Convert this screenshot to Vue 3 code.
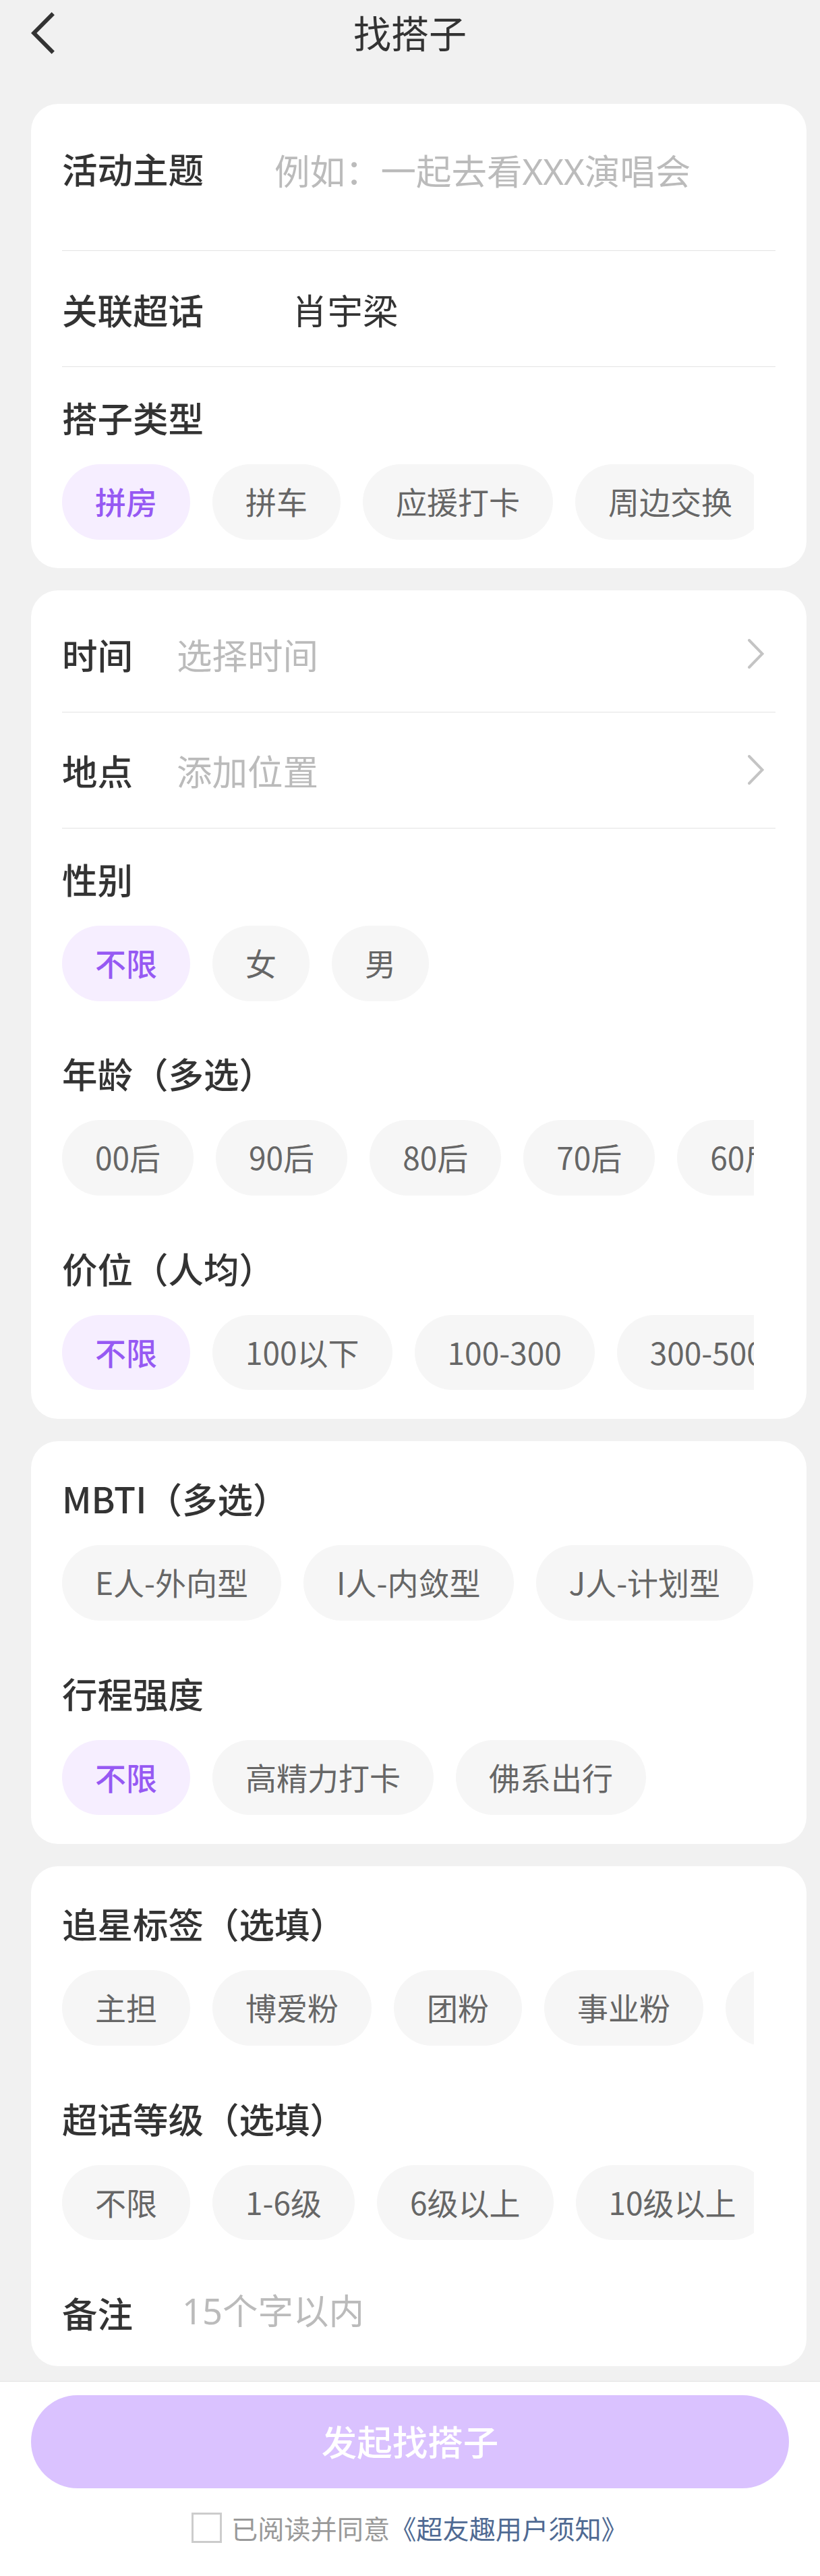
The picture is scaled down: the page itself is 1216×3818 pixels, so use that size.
<template>
  <div class="page">
    <header class="nav">
      <svg class="back" viewBox="0 0 36 64" @click="goBack">
        <path d="M32.8 3.2 L4.2 32 L32.8 60.8" />
      </svg>
      <div class="title">找搭子</div>
    </header>

    <main class="content">
      <!-- 活动信息 -->
      <section class="card">
        <div class="row theme">
          <span class="label">活动主题</span>
          <input v-model="form.theme" class="input" placeholder="例如：一起去看XXX演唱会" />
        </div>
        <div class="row topic">
          <span class="label">关联超话</span>
          <span class="value">{{ form.topic }}</span>
        </div>
        <div class="group first">
          <div class="label">搭子类型</div>
          <div class="chips">
            <span
                v-for="item in types"
                :key="item"
                class="chip"
                :class="{ active: form.type === item }"
                @click="form.type = item"
            >{{ item }}</span>
          </div>
        </div>
      </section>

      <!-- 时间地点、人员要求 -->
      <section class="card">
        <div v-for="row in pickers" :key="row.label" class="row picker">
          <span class="label">{{ row.label }}</span>
          <span class="placeholder">{{ row.hint }}</span>
          <svg class="arrow" viewBox="0 0 24 44">
            <path d="M2 2 L21.5 22 L2 42" />
          </svg>
        </div>
        <div v-for="(group, i) in people" :key="group.label" class="group" :class="{ first: i === 0 }">
          <div class="label">{{ group.label }}</div>
          <div class="chips">
            <span
                v-for="item in group.items"
                :key="item"
                class="chip"
                :class="{ active: group.selected.includes(item) }"
                @click="toggle(group, item)"
            >{{ item }}</span>
          </div>
        </div>
      </section>

      <section class="card">
        <div v-for="group in travel" :key="group.label" class="group">
          <div class="label">{{ group.label }}</div>
          <div class="chips">
            <span
                v-for="item in group.items"
                :key="item"
                class="chip"
                :class="{ active: group.selected.includes(item) }"
                @click="toggle(group, item)"
            >{{ item }}</span>
          </div>
        </div>
      </section>

      <!-- 选填 -->
      <section class="card">
        <div v-for="group in optional" :key="group.label" class="group">
          <div class="label">{{ group.label }}</div>
          <div class="chips">
            <span
                v-for="item in group.items"
                :key="item"
                class="chip"
                :class="{ active: group.selected.includes(item) }"
                @click="toggle(group, item)"
            >{{ item }}</span>
          </div>
        </div>
        <div class="row remark">
          <span class="label">备注</span>
          <input v-model="form.remark" class="input" maxlength="15" placeholder="15个字以内" />
        </div>
      </section>
    </main>

    <footer class="footer">
      <button class="submit">发起找搭子</button>
      <div class="agree">
        <span class="checkbox" :class="{ checked: agreed }" @click="agreed = !agreed"></span>
        <span class="agree-text">已阅读并同意</span>
        <a class="link">《超友趣用户须知》</a>
      </div>
    </footer>
  </div>
</template>

<script setup>
import { reactive, ref } from 'vue'

const form = reactive({
  theme: '',
  topic: '肖宇梁',
  type: '拼房',
  remark: ''
})
const agreed = ref(false)

const types = ['拼房', '拼车', '应援打卡', '周边交换']

const pickers = [
  { label: '时间', hint: '选择时间' },
  { label: '地点', hint: '添加位置' }
]

const people = reactive([
  { label: '性别', items: ['不限', '女', '男'], selected: ['不限'] },
  { label: '年龄（多选）', multi: true, items: ['00后', '90后', '80后', '70后', '60后'], selected: [] },
  { label: '价位（人均）', items: ['不限', '100以下', '100-300', '300-500'], selected: ['不限'] }
])

const travel = reactive([
  { label: 'MBTI（多选）', multi: true, items: ['E人-外向型', 'I人-内敛型', 'J人-计划型'], selected: [] },
  { label: '行程强度', items: ['不限', '高精力打卡', '佛系出行'], selected: ['不限'] }
])

const optional = reactive([
  { label: '追星标签（选填）', items: ['主担', '博爱粉', '团粉', '事业粉', ''], selected: [] },
  { label: '超话等级（选填）', items: ['不限', '1-6级', '6级以上', '10级以上'], selected: [] }
])

const toggle = (group, item) => {
  if (!group.multi) {
    group.selected = [item]
    return
  }
  const i = group.selected.indexOf(item)
  if (i > -1) {
    group.selected.splice(i, 1)
  } else {
    group.selected.push(item)
  }
}

const goBack = () => {
  window.history.back()
}
</script>

<style>
body {
  margin: 0;
  background: #f1f1f1;
}
</style>

<style scoped>
.page {
  display: flex;
  flex-direction: column;
  width: 1216px;
  height: 3818px;
  overflow: hidden;
  background: #f1f1f1;
  font-family: "Noto Sans CJK SC", sans-serif;
  font-size: 52.5px;
  color: #333;
}

.nav {
  display: grid;
  grid-template-columns: 36px 1fr 36px;
  align-items: center;
  height: 98px;
  padding: 0 46px;
}
.back {
  width: 36px;
  height: 64px;
}
.back path {
  fill: none;
  stroke: #333;
  stroke-width: 6;
}
.title {
  padding-bottom: 4px;
  font-size: 56px;
  line-height: 94px;
  text-align: center;
}

.content {
  flex: 1;
  display: flex;
  flex-direction: column;
  gap: 33px;
  padding: 56px 20px 0 46px;
}
.card {
  box-sizing: border-box;
  padding: 0 46px 20px;
  border-radius: 40px;
  background: #fff;
}

.row {
  display: flex;
  align-items: center;
  box-sizing: border-box;
  border-bottom: 1px solid #e3e3e3;
}
.label {
  font-weight: 500;
  line-height: 76px;
  white-space: nowrap;
}
.theme {
  align-items: flex-start;
  height: 218px;
  padding-top: 57px;
}
.theme .input {
  margin: 4px 0 0 105px;
}
.topic {
  height: 172px;
}
.topic .value {
  margin-left: 131px;
}
.picker {
  height: 172px;
  padding-bottom: 2px;
}
.picker:first-child {
  height: 181px;
  padding: 8px 0 0;
}
.placeholder {
  margin-left: 65px;
  color: #bbb;
}
.arrow {
  width: 24px;
  height: 44px;
  margin: 0 17px 0 auto;
}
.arrow path {
  fill: none;
  stroke: #c4c4c4;
  stroke-width: 4;
  stroke-linecap: round;
}
.remark {
  height: 144px;
  padding-top: 24px;
  border-bottom: 0;
}
.remark .input {
  margin: -6px 0 0 73px;
}

.input {
  flex: 1;
  min-width: 0;
  height: 76px;
  padding: 0;
  border: 0;
  outline: none;
  background: transparent;
  font-family: "Noto Sans", "Noto Sans CJK SC", sans-serif;
  font-size: 52.5px;
  color: #333;
}
.input::placeholder {
  color: #bbb;
  opacity: 1;
}

.group {
  box-sizing: border-box;
  height: 288.5px;
  padding-top: 46px;
}
.group.first {
  height: 278px;
  padding-top: 36px;
}
.chips {
  display: flex;
  gap: 33px;
  width: 1026px;
  margin-top: 32px;
  overflow: hidden;
}
.chip {
  flex: none;
  box-sizing: border-box;
  min-width: 144px;
  height: 111.5px;
  padding: 0 49px;
  border-radius: 56px;
  background: #f6f6f6;
  font-size: 46px;
  line-height: 108px;
  color: #666;
}
.chip.active {
  background: #f6eeff;
  font-weight: 500;
  color: #9659f3;
}

.footer {
  box-sizing: border-box;
  height: 289px;
  padding: 20px 46px 0;
  border-top: 1px solid #e2e2e2;
  background: #fff;
}
.submit {
  display: block;
  width: 100%;
  height: 138px;
  padding: 0 0 4px;
  border: 0;
  border-radius: 69px;
  background: #dac2ff;
  font-family: inherit;
  font-size: 52.5px;
  font-weight: 500;
  color: #fff;
}
.agree {
  display: flex;
  align-items: center;
  height: 46px;
  margin-top: 35px;
  padding-left: 238px;
  font-size: 39.2px;
}
.checkbox {
  box-sizing: border-box;
  width: 45px;
  height: 45px;
  margin-right: 14px;
  border: 3px solid #ccc;
}
.checkbox.checked {
  background: #9659f3;
}
.agree-text {
  color: #999;
}
.link {
  color: #4f6a93;
}
</style>
